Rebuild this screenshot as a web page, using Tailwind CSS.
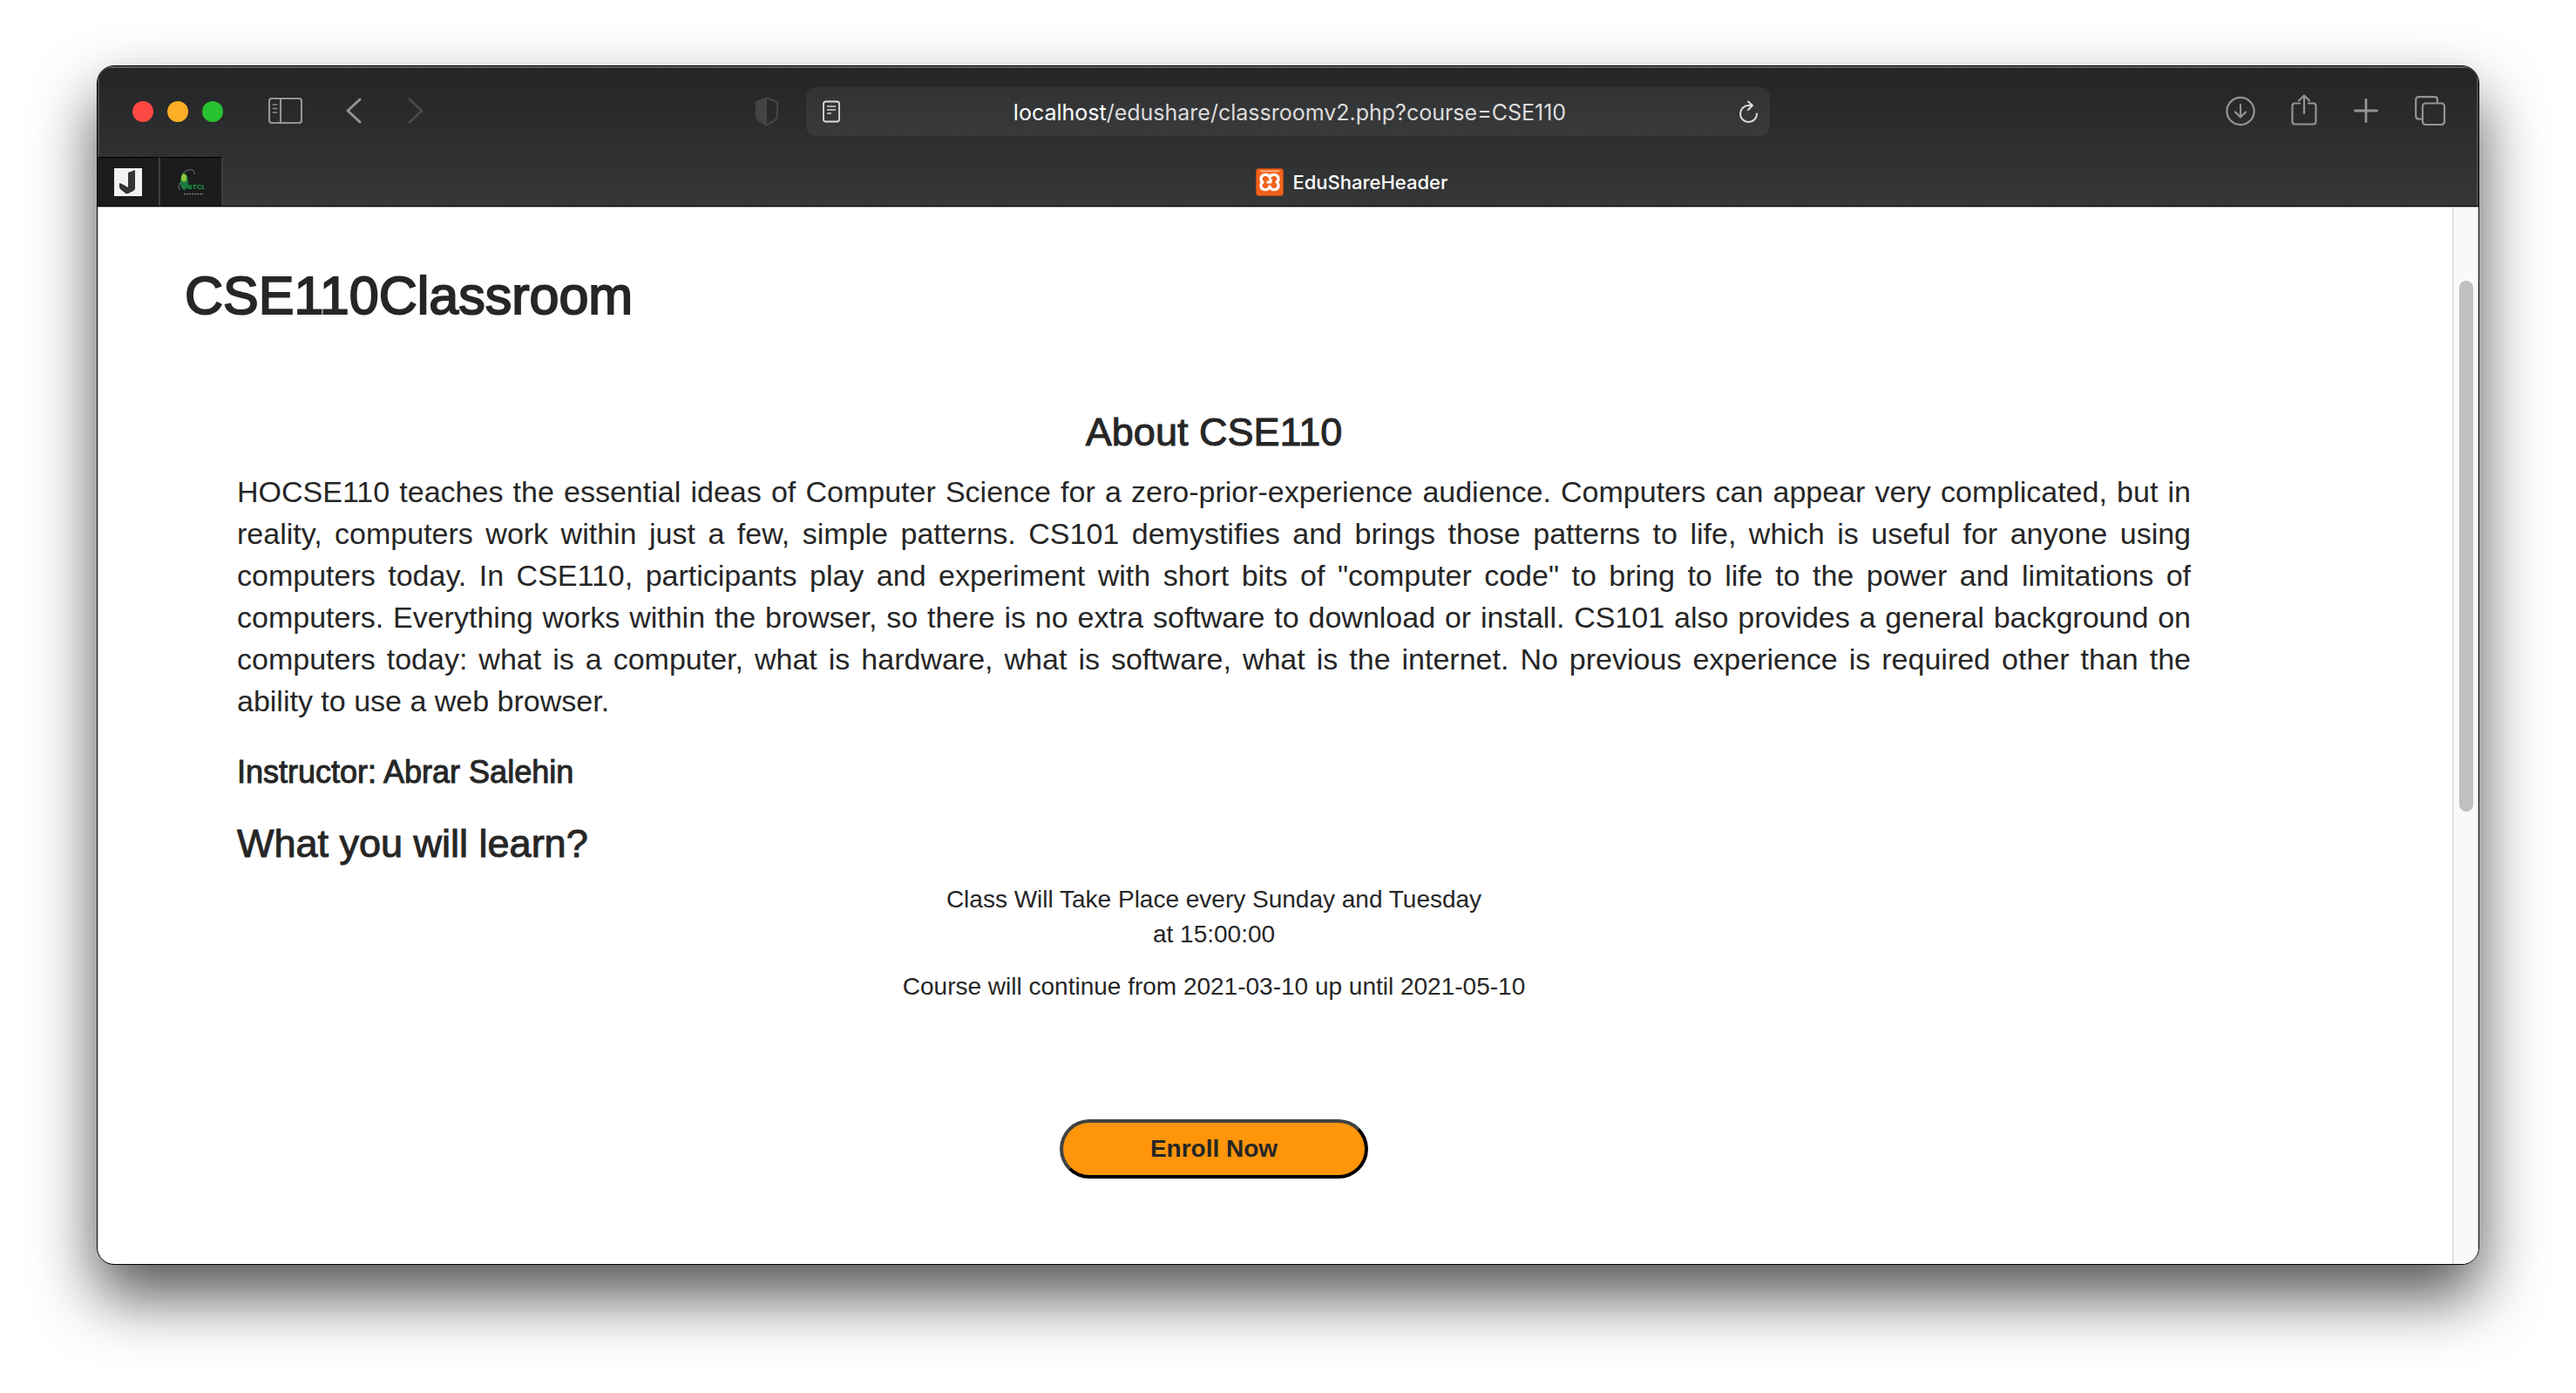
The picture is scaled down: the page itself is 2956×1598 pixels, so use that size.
<!DOCTYPE html>
<html lang="en">
<head>
<meta charset="utf-8">
<title>EduShareHeader</title>
<script src="https://cdn.jsdelivr.net/npm/@tailwindcss/browser@4"></script>
</head>
<body class="bg-white">
<div class="flex min-h-screen flex-col px-[111px] pt-[75px] pb-[147px]">
  <div class="flex flex-1 flex-col overflow-hidden rounded-[20px] border border-black bg-white shadow-[0_36px_72px_rgba(0,0,0,0.68)]">

    <!-- Browser chrome -->
    <header class="flex flex-col border-b border-black bg-linear-to-b from-[#232426] to-[#363738] font-['Inter',sans-serif] shadow-[inset_0_2px_0_#5d605f,inset_2px_0_0_#4a4a4a,inset_-2px_0_0_#4a4a4a]">
      <div class="grid h-[104px] grid-cols-[1fr_1106px_1fr] items-center">
        <div class="flex items-center pl-10">
          <div class="flex gap-4">
            <button aria-label="Close" class="size-6 rounded-full bg-[#fe4844]"></button>
            <button aria-label="Minimise" class="size-6 rounded-full bg-[#feae26]"></button>
            <button aria-label="Zoom" class="size-6 rounded-full bg-[#28c131]"></button>
          </div>
          <button aria-label="Sidebar" class="ml-[51px]">
            <svg class="block h-8 w-10" viewBox="0 0 40 32" fill="none" stroke="#949496" stroke-width="2.200">
              <rect x="2" y="1" width="37" height="28" rx="3"/><path d="M15 1v28"/><path stroke-linecap="round" stroke-width="1.700" d="M6.500 8h4M6.500 12.500h4M6.500 17h4"/>
            </svg>
          </button>
          <button aria-label="Back" class="ml-[50px]">
            <svg class="block h-8 w-5" viewBox="0 0 20 32" fill="none" stroke="#949496" stroke-width="3" stroke-linecap="round" stroke-linejoin="round"><path d="M16 2 2 15l14 13"/></svg>
          </button>
          <button aria-label="Forward" class="ml-[50px]">
            <svg class="block h-8 w-5" viewBox="0 0 20 32" fill="none" stroke="#48494a" stroke-width="3" stroke-linecap="round" stroke-linejoin="round"><path d="m3 2 14 13L3 28"/></svg>
          </button>
          <button aria-label="Privacy report" class="mr-[31px] ml-auto">
            <svg class="block h-[34px] w-7" viewBox="0 0 28 34"><path d="M14 1.500 26 6v16c0 4-6 7.500-12 10.500C8 29.500 2 26 2 22V6z" fill="none" stroke="#434445" stroke-width="2.200" stroke-linejoin="round"/><path d="M14 1v32C8 30 1 26.500 1 22V6z" fill="#434445"/></svg>
          </button>
        </div>
        <div class="flex h-14 items-center rounded-xl bg-white/6 pr-3 pl-[18px]">
          <button aria-label="Reader">
            <svg class="block h-[26px] w-[22px]" viewBox="0 0 22 26" fill="none" stroke="#dcdcdc"><rect x="2" y="1.500" width="18" height="23" rx="2.500" stroke-width="1.800"/><path stroke-width="1.800" stroke="#a9aaab" d="M6 7h10M6 11h10M6 15h5"/></svg>
          </button>
          <a href="#" class="flex-1 pt-[2px] text-center text-[25px] leading-8 text-[#dcdcdc]"><span class="text-white">localhost</span>/edushare/classroomv2.php?course=CSE110</a>
          <button aria-label="Reload">
            <svg class="block h-[26px] w-6" viewBox="0 0 24 26" fill="none" stroke="#dcdcdc" stroke-width="2" stroke-linecap="round" stroke-linejoin="round"><path d="M21 15.500A9.500 9.500 0 1 1 11.500 6H16M11 1.500 16 6l-5 5"/></svg>
          </button>
        </div>
        <div class="flex items-center justify-end gap-10 pr-[37px] text-[#949496]">
          <button aria-label="Downloads">
            <svg class="block size-9" viewBox="0 0 36 36" fill="none" stroke="currentColor" stroke-width="2.200" stroke-linecap="round" stroke-linejoin="round"><circle cx="18" cy="17.500" r="15.600"/><path d="M18 10V24.500M12 18.500l6 6 6-6"/></svg>
          </button>
          <button aria-label="Share">
            <svg class="block h-10 w-[30px]" viewBox="0 0 30 40" fill="none" stroke="currentColor" stroke-width="2.200" stroke-linecap="round" stroke-linejoin="round"><path d="M10 10.500H4.500q-3 0-3 3v18q0 3 3 3h21q3 0 3-3v-18q0-3-3-3H20M15 22V1.500M9 7.500l6-6 6 6"/></svg>
          </button>
          <button aria-label="New tab">
            <svg class="block size-8" viewBox="0 0 32 32" fill="none" stroke="currentColor" stroke-width="2.800" stroke-linecap="round"><path d="M16 2.500v25M3.500 15h25"/></svg>
          </button>
          <button aria-label="Tab overview">
            <svg class="block size-9" viewBox="0 0 36 36" fill="none" stroke="currentColor" stroke-width="2.200" stroke-linejoin="round"><rect x="9" y="8.500" width="25" height="24.500" rx="3.500"/><path d="M9 26.500H4.500Q1.200 26.500 1.200 23V4.500Q1.200 1.200 4.500 1.200h18Q26 1.200 26 4.500v4"/></svg>
          </button>
        </div>
      </div>

      <!-- Tab strip -->
      <nav class="flex h-14">
        <a href="#" aria-label="J" class="flex w-[72px] items-center justify-center border-t border-r-2 border-t-black border-r-[#3d3e3f] bg-[#1b1c1c]">
          <svg class="block size-8" viewBox="0 0 32 32"><path fill="#f2f2f2" d="M0 0h32v32H0z"/><path fill="#333436" d="M16 5l8-3v21q0 2-2 3l-6 3q-2 1-4-1l-5-4q-1-1-1-2v-5l3 1 7 4z"/></svg>
        </a>
        <a href="#" aria-label="BTCL" class="flex w-[72px] items-center justify-center border-t border-r-2 border-t-black border-r-[#3d3e3f] bg-[#1b1c1c]">
          <svg class="block size-8" viewBox="0 0 32 32"><ellipse cx="8.500" cy="15.500" rx="4.500" ry="9.500" fill="#1d7c3c"/><ellipse cx="8" cy="11" rx="3" ry="4.500" fill="#8fc63f"/><path d="M6 7Q12 0 18 2q2 2 2 5M4 16q-3 5-1 9" fill="none" stroke="#6f7472"/><text x="12" y="24" font-family="Liberation Sans Narrow, Liberation Sans" font-weight="700" font-size="8" fill="#18a04a">BTCL</text><path d="M8 29.500h22" stroke="#777a78" stroke-width="1.500" stroke-dasharray="2 1"/></svg>
        </a>
        <a href="#" class="flex flex-1 items-center justify-center gap-[10px] pt-[2px] pl-[3px] text-[22px] leading-8 font-medium text-white">
          <svg class="block size-8" viewBox="0 0 32 32"><rect x=".5" y=".5" width="31" height="31" rx="3" fill="#f0611a" stroke="#b44a16"/><path d="M4 2.500h24l-2 1.800H6z" fill="#fbb88c"/><path d="M16 10.500C15 8 12.500 7 10 7.500 5 8.500 5 14 8 16c-3 2-3 8 2 8.500 3 .5 5-1 6-3.500 1 2.500 3 4 6 3.500 5-.5 5-6.500 2-8.500 3-2 3-7.500-2-8.500-2.500-.5-5 .5-6 3zM12.500 16H17v-4" fill="none" stroke="#fff" stroke-width="3.200" stroke-linejoin="round"/></svg>
          EduShareHeader
        </a>
      </nav>
    </header>

    <!-- Page -->
    <div class="flex flex-1 border-t border-[#aaa] font-['Liberation_Sans',Arial,sans-serif] text-[#262626]">
      <main class="flex-1 pt-[68px]">
        <h1 class="pl-[100px] text-[61px] leading-[66px] [-webkit-text-stroke:2px]">CSE110Classroom</h1>
        <section class="flex flex-col pr-[300px] pl-40">
          <h2 class="mt-[98px] text-center text-[45px] leading-[52px] [-webkit-text-stroke:1px]">About CSE110</h2>
          <p class="mt-[18px] text-justify text-[34px] leading-[48px]">HOCSE110 teaches the essential ideas of Computer Science for a zero-prior-experience audience. Computers can appear very complicated, but in reality, computers work within just a few, simple patterns. CS101 demystifies and brings those patterns to life, which is useful for anyone using computers today. In CSE110, participants play and experiment with short bits of "computer code" to bring to life to the power and limitations of computers. Everything works within the browser, so there is no extra software to download or install. CS101 also provides a general background on computers today: what is a computer, what is hardware, what is software, what is the internet. No previous experience is required other than the ability to use a web browser.</p>
          <h3 class="mt-[38px] text-[36px] leading-10 [-webkit-text-stroke:1px]">Instructor: Abrar Salehin</h3>
          <h2 class="mt-9 text-[45px] leading-[52px] [-webkit-text-stroke:1px]">What you will learn?</h2>
          <p class="mt-[18px] text-center text-[28px] leading-10">Class Will Take Place every Sunday and Tuesday<br>at 15:00:00</p>
          <p class="mt-5 text-center text-[28px] leading-10">Course will continue from 2021-03-10 up until 2021-05-10</p>
          <button class="mt-[132px] h-[68px] w-[354px] self-center rounded-full border-4 border-t-[#3f4244] border-r-black border-b-black border-l-[#3f4244] bg-[#ff950a] text-[28px] font-bold">Enroll Now</button>
        </section>
      </main>
      <div class="flex w-[30px] flex-col items-start border-l-2 border-[#e2e2e2] bg-[#f9f9f9] pt-[84px] pl-[6px]">
        <div class="h-[609px] w-4 rounded-full bg-[#c0c0c0]"></div>
      </div>
    </div>
  </div>
</div>
</body>
</html>
